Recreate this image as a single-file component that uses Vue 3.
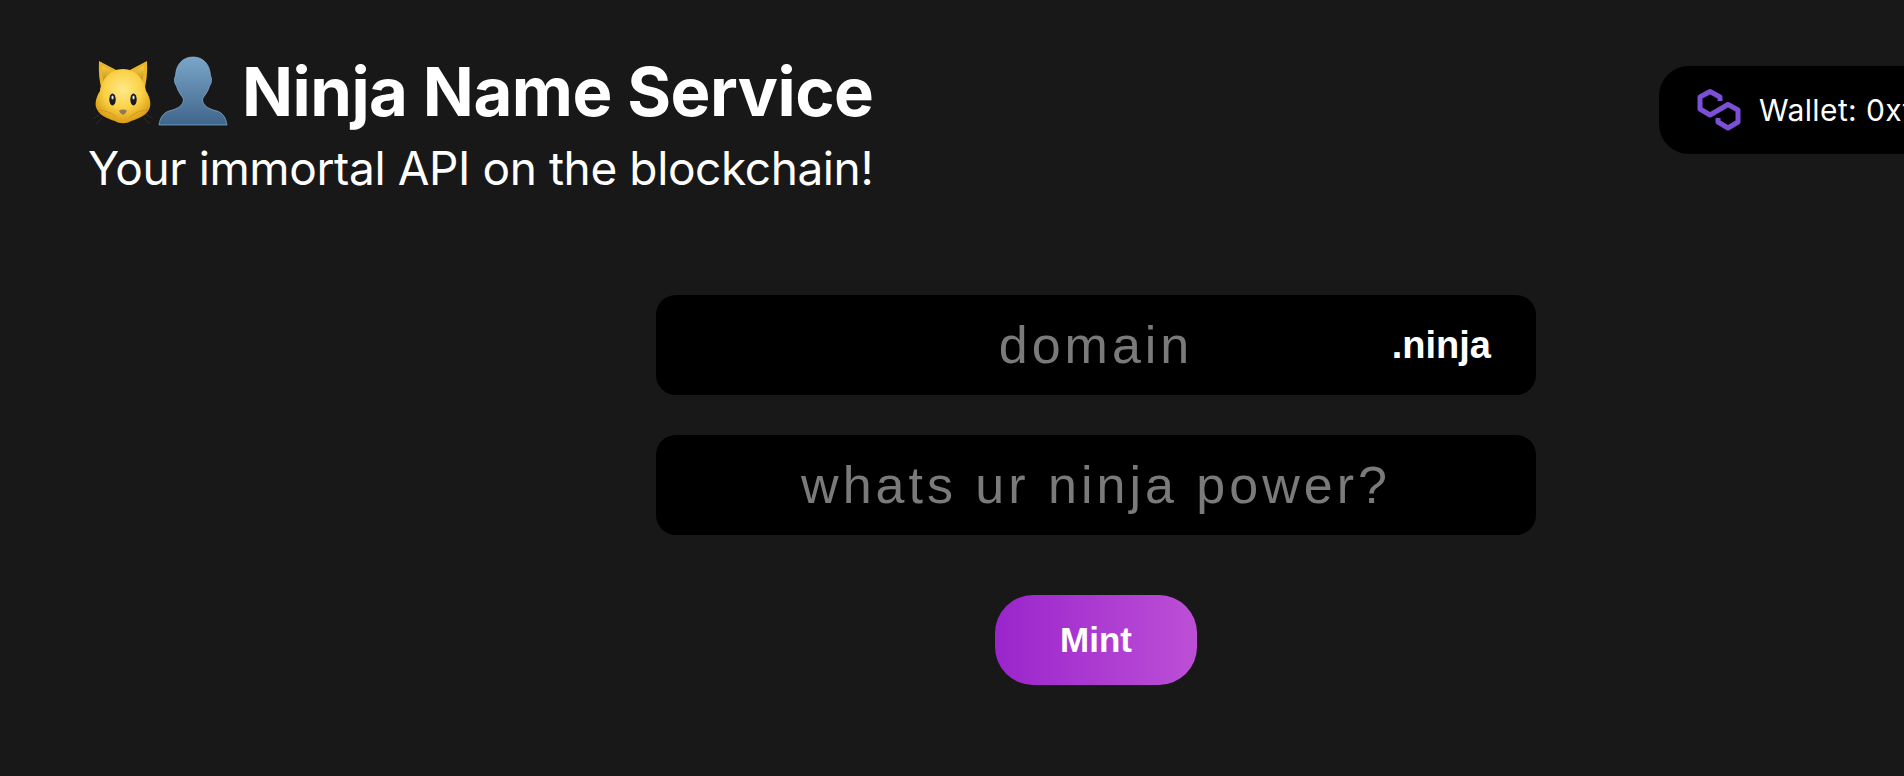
<template>
  <div class="page">
    <header class="header">
      <div class="brand">
        <div class="title">
          <svg class="cat" viewBox="0 0 66 76" aria-hidden="true">
            <defs>
              <radialGradient id="catFace" cx="50%" cy="38%" r="62%">
                <stop offset="0" stop-color="#ffe98a" />
                <stop offset="0.55" stop-color="#fbd247" />
                <stop offset="1" stop-color="#d99a10" />
              </radialGradient>
              <linearGradient id="catEar" x1="0" y1="0" x2="0" y2="1">
                <stop offset="0" stop-color="#f7cf45" />
                <stop offset="1" stop-color="#b9820f" />
              </linearGradient>
            </defs>
            <path d="M9 8 L30 19 L12 38 Q8 24 9 8Z" fill="#e9b52a" />
            <path d="M57 8 L36 19 L54 38 Q58 24 57 8Z" fill="#e9b52a" />
            <path d="M12 13 L26 20 L14 31 Q12 22 12 13Z" fill="url(#catEar)" />
            <path d="M54 13 L40 20 L52 31 Q54 22 54 13Z" fill="url(#catEar)" />
            <path d="M33 16 C47 16 55 28 56 38 C60 44 61 50 60 54 C58 62 48 66 41 68 C37 71 29 71 25 68 C18 66 8 62 6 54 C5 50 6 44 10 38 C11 28 19 16 33 16Z" fill="url(#catFace)" />
            <path d="M8 57 Q18 57 26 64 M58 57 Q48 57 40 64" fill="none" stroke="#c98e12" stroke-width="1" opacity="0.7" />
            <ellipse cx="22.5" cy="46.5" rx="3.2" ry="6" fill="#1a1a22" />
            <ellipse cx="43.5" cy="46.5" rx="3.2" ry="6" fill="#1a1a22" />
            <ellipse cx="22.5" cy="44.5" rx="1.1" ry="2" fill="#dfe3ea" />
            <ellipse cx="43.5" cy="44.5" rx="1.1" ry="2" fill="#dfe3ea" />
            <path d="M29 57.5 Q33 55.5 37 57.5 Q36 61 33 62 Q30 61 29 57.5Z" fill="#8f7a5a" />
            <path d="M3 66 L10 61 M6 71 L12 65 M63 66 L56 61 M60 71 L54 65" stroke="#3b3420" stroke-width="0.7" />
          </svg>
          <svg class="person" viewBox="0 0 76 78" aria-hidden="true">
            <defs>
              <linearGradient id="personFill" x1="0" y1="0" x2="0" y2="1">
                <stop offset="0" stop-color="#7aa5c9" />
                <stop offset="1" stop-color="#40658a" />
              </linearGradient>
            </defs>
            <path d="M38 5 C48 5 55 12 55.500 24 C57 26 57 31 54.500 34 C53 40 49 44 47.500 47 C47.500 54 54 57 62 59 C68 61 71 66 72 73 L4 73 C5 66 8 61 14 59 C22 57 28.500 54 28.500 47 C27 44 23 40 21.500 34 C19 31 19 26 20.500 24 C21 12 28 5 38 5Z" fill="url(#personFill)" stroke="#86b3d6" stroke-width="0.7" />
          </svg>
          <span class="name">Ninja Name Service</span>
        </div>
        <p class="tagline">Your immortal API on the blockchain!</p>
      </div>
      <div class="wallet">
        <svg class="polygon" viewBox="0 0 60 60" aria-hidden="true">
          <path d="M31 21 V17 L21 11.500 L11 17 V29 L21 35 L39 24.500 L49 30 V42 L39 48 L29 42 V38" fill="none" stroke="#7b4fd6" stroke-width="5" stroke-linejoin="round" />
        </svg>
        <span>Wallet: 0xf39F...2266</span>
      </div>
    </header>

    <form class="form" @submit.prevent>
      <div class="field">
        <input v-model="domain" type="text" placeholder="domain" />
        <span class="tld">.ninja</span>
      </div>
      <div class="field">
        <input v-model="record" type="text" placeholder="whats ur ninja power?" />
      </div>
      <button class="mint" type="submit">Mint</button>
    </form>
  </div>
</template>

<script setup>
import { ref } from "vue";

const domain = ref("");
const record = ref("");
</script>

<style>
html,
body {
  margin: 0;
  height: 100%;
  overflow: hidden;
  background: #181818;
}
</style>

<style scoped>
.page {
  height: 776px;
  overflow: hidden;
  background: #181818;
  color: #fff;
  font-family: "Inter", sans-serif;
}
.header {
  display: flex;
  align-items: flex-start;
  padding: 50px 0 0 89px;
}
.brand {
  width: 782px;
  flex-shrink: 0;
}
.title {
  display: flex;
  align-items: center;
  height: 82px;
}
.cat {
  flex: none;
  width: 66px;
  height: 76px;
  margin-left: 1px;
}
.person {
  flex: none;
  width: 76px;
  height: 78px;
  margin-left: -1px;
}
.name {
  margin-left: 11px;
  font-size: 67px;
  font-weight: 700;
  letter-spacing: -0.5px;
  white-space: nowrap;
}
.tagline {
  margin: 6px 0 0 -1px;
  font-size: 46px;
  line-height: 60px;
  letter-spacing: -0.4px;
  white-space: nowrap;
}
.wallet {
  display: flex;
  align-items: center;
  flex-shrink: 0;
  height: 88px;
  margin: 16px 0 0 788px;
  padding: 0 40px 0 30px;
  border-radius: 30px;
  background: #000;
  font-size: 30px;
  letter-spacing: 0.4px;
  white-space: nowrap;
}
.polygon {
  width: 60px;
  height: 60px;
  margin-right: 10px;
}
.form {
  display: flex;
  flex-direction: column;
  align-items: center;
  gap: 40px;
  width: 880px;
  margin: 97px 0 0 656px;
}
.field {
  position: relative;
  width: 100%;
}
.field input {
  display: block;
  box-sizing: border-box;
  width: 100%;
  height: 100px;
  padding: 0 20px;
  border: 0;
  border-radius: 20px;
  outline: none;
  background: #000;
  color: #fff;
  font-family: "Liberation Sans", Arial, sans-serif;
  font-size: 52px;
  letter-spacing: 4px;
  text-align: center;
}
.field input::placeholder {
  color: #7a7a7a;
  opacity: 1;
}
.tld {
  position: absolute;
  top: 50%;
  right: 45px;
  transform: translateY(-50%);
  font-family: "Liberation Sans", Arial, sans-serif;
  font-size: 38px;
  font-weight: 700;
}
.mint {
  width: 202px;
  height: 90px;
  margin-top: 20px;
  border: 0;
  border-radius: 38px;
  background: linear-gradient(to right, #9a25cc, #bd4fd6);
  color: #fff;
  font-family: "Liberation Sans", Arial, sans-serif;
  font-size: 35px;
  font-weight: 700;
}
</style>
